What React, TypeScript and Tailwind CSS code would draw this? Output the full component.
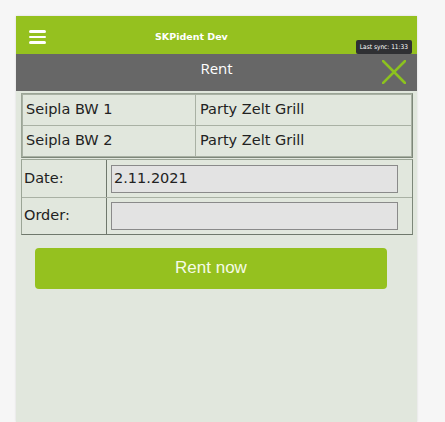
export default function App() {
    const items = [
        ["Seipla BW 1", "Party Zelt Grill"],
        ["Seipla BW 2", "Party Zelt Grill"],
    ];

    return (
        <div className="min-h-screen bg-[#f6f6f6] pt-[16px] pl-[16px]">
            <div className="w-[401px] h-[406px] bg-[#e1e7dd] shadow-[0_0_2px_rgba(0,0,0,0.12)] flex flex-col">
                {/* top bar */}
                <div className="relative h-[38px] bg-[#95c11f] flex items-center pt-[4px]">
                    <div className="ml-[13px] flex flex-col gap-[3px]">
                        <div className="w-[17px] h-[2.5px] bg-white rounded-sm"></div>
                        <div className="w-[17px] h-[2.5px] bg-white rounded-sm"></div>
                        <div className="w-[17px] h-[2.5px] bg-white rounded-sm"></div>
                    </div>
                    <div className="ml-[109px] text-white text-[9.5px] font-bold font-['DejaVu_Sans',sans-serif]">
                        SKPident Dev
                    </div>
                    <div className="absolute right-[5px] top-[24px] bg-[#2f3033] text-white text-[6.5px] leading-none px-[4px] pt-[4px] pb-[3.5px] rounded-[2px] font-['DejaVu_Sans_Condensed','DejaVu_Sans',sans-serif] z-10">
                        Last sync: 11:33
                    </div>
                </div>

                {/* page title */}
                <div className="relative h-[37px] bg-[#676767] flex justify-center pt-[4px]">
                    <span className="text-white text-[15px] leading-[20px] font-['Open_Sans',sans-serif]">Rent</span>
                    <svg className="absolute right-[11px] top-[6px]" width="24" height="24" viewBox="0 0 24 24">
                        <path d="M1 1 L23 23 M23 1 L1 23" stroke="#8cc21f" strokeWidth="2.6" strokeLinecap="square" />
                    </svg>
                </div>

                <div className="pl-[5px] pr-[4px] pt-[2px] font-['DejaVu_Sans',sans-serif] text-[14.5px] text-[#222]">
                    {/* items */}
                    <div className="border border-[#9ba596] border-b-[#7d8779] border-r-[#7d8779]">
                        {items.map((row, i) => (
                            <div key={i} className="flex h-[32px] border border-[#a9b1a4] -mt-px first:mt-0">
                                <div className="w-[173px] border-r border-[#a9b1a4] flex items-center pl-[3px]">{row[0]}</div>
                                <div className="flex-1 flex items-center pl-[4px]">{row[1]}</div>
                            </div>
                        ))}
                    </div>

                    {/* form */}
                    <div className="mt-px border border-[#9ba596] border-b-[#6f786c] border-r-[#7d8779]">
                        <div className="flex h-[38px] border-b border-[#a9b1a4]">
                            <div className="w-[85px] border-r border-[#6f786c] flex items-center pl-[2px]">Date:</div>
                            <div className="flex-1 flex items-center pl-[4px] pr-[14px]">
                                <div className="w-full h-[28px] bg-[#e3e3e3] border border-[#8a8a8a] flex items-center pl-[2px]">2.11.2021</div>
                            </div>
                        </div>
                        <div className="flex h-[36px]">
                            <div className="w-[85px] border-r border-[#6f786c] flex items-center pl-[2px]">Order:</div>
                            <div className="flex-1 flex items-center pl-[4px] pr-[14px]">
                                <div className="w-full h-[28px] bg-[#e3e3e3] border border-[#8a8a8a]"></div>
                            </div>
                        </div>
                    </div>

                    <button className="mt-[13px] ml-[14px] w-[352px] h-[41px] bg-[#95c11f] rounded-[4px] text-[#f5fbe6] text-[17px] font-['Liberation_Sans',Arial,sans-serif] flex items-center justify-center pb-[2px]">
                        Rent now
                    </button>
                </div>
            </div>
        </div>
    );
}
